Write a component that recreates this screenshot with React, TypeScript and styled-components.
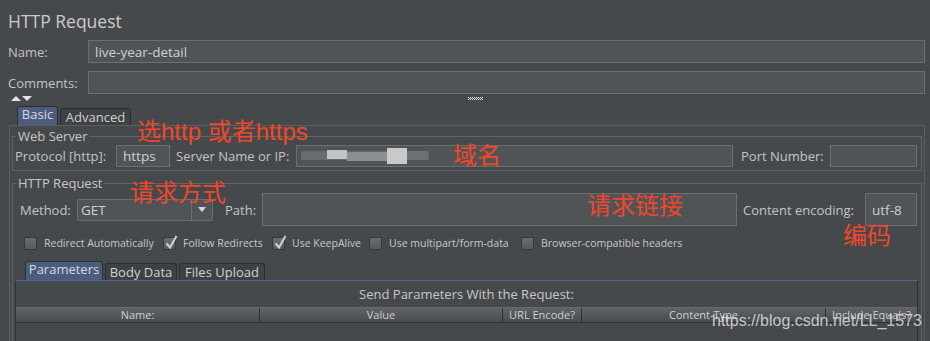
import React from "react";
import styled, { createGlobalStyle, css } from "styled-components";

const ui = `"Open Sans", "DejaVu Sans", sans-serif`;

const GlobalStyle = createGlobalStyle`
  html, body {
    margin: 0;
    background: #46494b;
  }
`;

// Page frame
const Page = styled.div`
  position: relative;
  width: 930px;
  height: 341px;
  overflow: hidden;
  background: #46494b;
  color: #c4c4c4;
  font-family: ${ui};
`;

const Title = styled.h1`
  margin: 0;
  padding: 10px 8px 0;
  height: 22px;
  line-height: 22px;
  font-size: 17.5px;
  font-weight: 400;
  color: #cbcbcb;
`;

const TopRow = styled.div`
  display: flex;
  align-items: center;
  height: 23px;
  margin-top: 8px;
  padding: 0 5px 0 8px;
`;

const TopLabel = styled.span`
  flex: none;
  width: 80px;
  font-size: 13px;
`;

const Field = styled.div<{ $w?: number; $h?: number }>`
  box-sizing: border-box;
  height: ${(p) => p.$h ?? 22}px;
  ${(p) =>
    p.$w
      ? css`
          flex: none;
          width: ${p.$w}px;
        `
      : css`
          flex: 1;
          min-width: 0;
        `}
  display: flex;
  align-items: center;
  padding: 0 6px;
  background: #515456;
  border: 1px solid #6c6f71;
  font-size: 13.5px;
  color: #d0d0d0;
  white-space: nowrap;
  overflow: hidden;
`;

// splitter with collapse arrows
const SplitBar = styled.div`
  display: flex;
  align-items: flex-start;
  height: 11px;
  padding: 2px 0 0 11px;
  box-sizing: border-box;
`;

const Arrow = styled.span<{ $up?: boolean }>`
  width: 0;
  height: 0;
  margin-right: 1px;
  border-left: 5px solid transparent;
  border-right: 5px solid transparent;
  ${(p) => (p.$up ? "border-bottom: 5px solid #e4e4e4;" : "border-top: 5px solid #e4e4e4;")}
`;

const Grip = styled.svg`
  margin-left: 435px;
  margin-top: 1px;
`;

// tabs
const TabStrip = styled.div<{ $h: number; $pl: number; $mt?: number }>`
  display: flex;
  align-items: flex-end;
  gap: 2px;
  height: ${(p) => p.$h}px;
  margin-top: ${(p) => p.$mt ?? 0}px;
  padding-left: ${(p) => p.$pl}px;
`;

const Tab = styled.div<{ $active?: boolean; $w: number; $h: number }>`
  box-sizing: border-box;
  flex: none;
  width: ${(p) => p.$w}px;
  height: ${(p) => (p.$active ? p.$h : p.$h - 2)}px;
  display: flex;
  align-items: center;
  justify-content: center;
  border: 1px solid #2c2e30;
  border-bottom: none;
  border-radius: 3px 3px 0 0;
  background: ${(p) => (p.$active ? "#4b5c7c" : "#3f4244")};
  color: ${(p) => (p.$active ? "#d4dae6" : "#d0d0d0")};
  font-size: 13px;
  line-height: 1;
  padding-bottom: ${(p) => (p.$active ? 3 : 0)}px;
`;

const TabPanel = styled.div`
  box-sizing: border-box;
  height: 220px;
  margin: 0 5px 0 9px;
  padding: 3px 2px 0;
  border: 1px solid #5c5f62;
  border-bottom: none;
`;

const Group = styled.fieldset<{ $mt?: number; $pt?: number }>`
  margin: ${(p) => p.$mt ?? 0}px 0 0;
  padding: ${(p) => p.$pt ?? 2}px 2px 3px;
  min-width: 0;
  border: 1px solid #616467;
`;

const Legend = styled.legend`
  margin-left: 1px;
  padding: 0 2px;
  font-size: 13px;
  line-height: 14px;
  color: #c8c8c8;
`;

const FormLine = styled.div<{ $h: number; $pl?: number }>`
  display: flex;
  align-items: center;
  height: ${(p) => p.$h}px;
  padding: 0 2px 0 ${(p) => p.$pl ?? 0}px;
`;

const Label = styled.span<{ $w: number; $ml?: number }>`
  flex: none;
  width: ${(p) => p.$w}px;
  margin-left: ${(p) => p.$ml ?? 0}px;
  font-size: 13px;
  white-space: nowrap;
`;

const Select = styled.div`
  box-sizing: border-box;
  flex: none;
  width: 136px;
  height: 22px;
  display: flex;
  background: #515456;
  border: 1px solid #6c6f71;
  border-radius: 2px;
  font-size: 13.5px;
  color: #d0d0d0;
`;

const SelectValue = styled.span`
  flex: 1;
  padding-left: 3px;
  line-height: 20px;
`;

const SelectButton = styled.span`
  width: 20px;
  display: flex;
  align-items: center;
  justify-content: center;
  border-left: 1px solid #6c6f71;

  &::after {
    content: "";
    border-left: 4px solid transparent;
    border-right: 4px solid transparent;
    border-top: 5px solid #d6d6d6;
  }
`;

// checkbox line
const CheckRow = styled.div`
  display: flex;
  align-items: center;
  height: 14px;
  margin-top: 10px;
  padding-left: 9px;
`;

const CheckItem = styled.label<{ $w?: number }>`
  flex: none;
  display: flex;
  align-items: center;
  gap: 7px;
  width: ${(p) => (p.$w ? `${p.$w}px` : "auto")};
  font-size: 10.5px;
  color: #c8c8c8;
  white-space: nowrap;
`;

const CheckBox = styled.span`
  position: relative;
  box-sizing: border-box;
  flex: none;
  width: 13px;
  height: 13px;
  border: 1px solid #35373a;
  border-radius: 2px;
  background: linear-gradient(#6b6e70, #57595c);

  svg {
    position: absolute;
    left: 1px;
    top: -3px;
    overflow: visible;
  }
`;

// parameters table
const ParamPanel = styled.div`
  height: 80px;
  margin-right: 1px;
  border: 1px solid #2f3234;
  border-top-color: #54698f;
  border-bottom: none;
`;

const ParamTitle = styled.div`
  height: 26px;
  line-height: 26px;
  text-align: center;
  font-size: 13px;
  color: #c8c8c8;
`;

const TableHead = styled.div`
  display: grid;
  grid-template-columns: 244px 243px 79px 244px 1fr;
  height: 14px;
  background: linear-gradient(#606366, #4a4d50);
  border-top: 1px solid #686b6e;
  border-bottom: 1px solid #2f3133;
`;

const HeadCell = styled.div`
  border-right: 1px solid #2e3032;
  font-size: 11px;
  line-height: 14px;
  text-align: center;
  white-space: nowrap;
  overflow: hidden;
  color: #d0d0d0;

  &:last-child {
    border-right: none;
  }
`;

// overlays: hand-written notes on the screenshot
const Note = styled.div<{ $x: number; $y: number }>`
  position: absolute;
  left: ${(p) => p.$x}px;
  top: ${(p) => p.$y}px;
  font-family: "Liberation Sans", "Noto Sans CJK SC", sans-serif;
  font-size: 24px;
  line-height: 24px;
  color: #f0472a;
  white-space: nowrap;
`;

const Watermark = styled.div`
  position: absolute;
  left: 712px;
  top: 312px;
  font-family: "Liberation Sans", sans-serif;
  font-size: 16px;
  line-height: 18px;
  color: rgba(232, 232, 232, 0.8);
  white-space: nowrap;
`;

const Tick = () => (
  <svg width="13" height="15" viewBox="0 0 13 15">
    <path d="M1.5 8.5 L5 12.5 L11.5 1" fill="none" stroke="#d2d2d2" strokeWidth="2" />
  </svg>
);

const Check = ({ label, checked, w }: { label: string; checked?: boolean; w?: number }) => (
  <CheckItem $w={w}>
    <CheckBox>{checked && <Tick />}</CheckBox>
    {label}
  </CheckItem>
);

const Smudge = () => (
  <svg width="130" height="18" viewBox="0 0 130 18" style={{ marginLeft: -2 }}>
    <rect x="0" y="4" width="128" height="9" fill="#7a7d7f" opacity="0.6" />
    <rect x="26" y="3" width="20" height="9" fill="#c4c4c4" />
    <rect x="46" y="5" width="40" height="9" fill="#8c8e90" />
    <rect x="86" y="1" width="20" height="16" fill="#c9c9c9" />
    <rect x="106" y="4" width="20" height="9" fill="#6e7173" />
  </svg>
);

const GripDots = () => (
  <Grip width="15" height="4" viewBox="0 0 15 4">
    {Array.from({ length: 8 }).map((_, i) => (
      <rect key={`a${i}`} x={i * 2} y="0" width="1" height="1" fill="#dcdcdc" />
    ))}
    {Array.from({ length: 7 }).map((_, i) => (
      <rect key={`b${i}`} x={i * 2 + 1} y="1" width="1" height="1" fill="#dcdcdc" />
    ))}
    {Array.from({ length: 8 }).map((_, i) => (
      <rect key={`c${i}`} x={i * 2} y="2" width="1" height="1" fill="#dcdcdc" />
    ))}
  </Grip>
);

const columns = ["Name:", "Value", "URL Encode?", "Content-Type", "Include Equals?"];

export default function App() {
  return (
    <>
      <GlobalStyle />
      <Page>
        <Title>HTTP Request</Title>

        <TopRow>
          <TopLabel>Name:</TopLabel>
          <Field $h={23}>live-year-detail</Field>
        </TopRow>
        <TopRow>
          <TopLabel>Comments:</TopLabel>
          <Field $h={23} />
        </TopRow>

        <SplitBar>
          <Arrow $up />
          <Arrow />
          <GripDots />
        </SplitBar>

        <TabStrip $h={20} $pl={17}>
          <Tab $active $w={41} $h={19}>
            Basic
          </Tab>
          <Tab $w={71} $h={19}>
            Advanced
          </Tab>
        </TabStrip>

        <TabPanel>
          <Group>
            <Legend>Web Server</Legend>
            <FormLine $h={22}>
              <Label $w={101}>Protocol [http]:</Label>
              <Field $w={54}>https</Field>
              <Label $w={120} $ml={6}>
                Server Name or IP:
              </Label>
              <Field>
                <Smudge />
              </Field>
              <Label $w={89} $ml={8}>
                Port Number:
              </Label>
              <Field $w={87} />
            </FormLine>
          </Group>

          <Group $mt={5} $pt={3}>
            <Legend>HTTP Request</Legend>
            <FormLine $h={33} $pl={5}>
              <Label $w={57}>Method:</Label>
              <Select>
                <SelectValue>GET</SelectValue>
                <SelectButton />
              </Select>
              <Label $w={37} $ml={12}>
                Path:
              </Label>
              <Field $h={33} />
              <Label $w={122} $ml={6}>
                Content encoding:
              </Label>
              <Field $w={52} $h={33}>
                utf-8
              </Field>
            </FormLine>

            <CheckRow>
              <Check w={139} label="Redirect Automatically" />
              <Check w={109} checked label="Follow Redirects" />
              <Check w={97} checked label="Use KeepAlive" />
              <Check w={152} label="Use multipart/form-data" />
              <Check label="Browser-compatible headers" />
            </CheckRow>

            <TabStrip $h={19} $pl={10} $mt={11}>
              <Tab $active $w={78} $h={19}>
                Parameters
              </Tab>
              <Tab $w={72} $h={19}>
                Body Data
              </Tab>
              <Tab $w={86} $h={19}>
                Files Upload
              </Tab>
            </TabStrip>

            <ParamPanel>
              <ParamTitle>Send Parameters With the Request:</ParamTitle>
              <TableHead>
                {columns.map((c) => (
                  <HeadCell key={c}>{c}</HeadCell>
                ))}
              </TableHead>
            </ParamPanel>
          </Group>
        </TabPanel>

        <Note $x={137} $y={120}>选http 或者https</Note>
        <Note $x={453} $y={144}>域名</Note>
        <Note $x={130} $y={181}>请求方式</Note>
        <Note $x={587} $y={194}>请求链接</Note>
        <Note $x={843} $y={224}>编码</Note>
        <Watermark>https://blog.csdn.net/LL_1573</Watermark>
      </Page>
    </>
  );
}
